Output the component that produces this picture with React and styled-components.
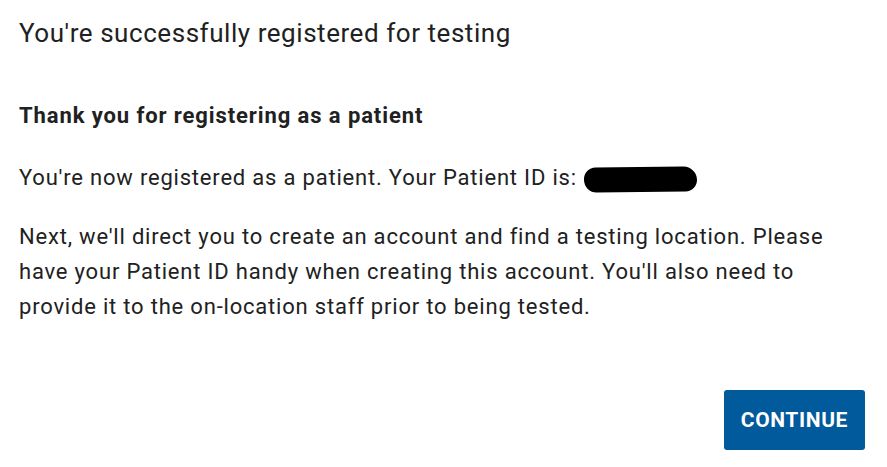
import React from "react";
import styled, { createGlobalStyle } from "styled-components";

const GlobalStyle = createGlobalStyle`
  html, body {
    margin: 0;
    padding: 0;
    background: #ffffff;
  }
  body {
    font-family: Roboto, "Liberation Sans", Arial, sans-serif;
    color: #212121;
  }
`;

const Dialog = styled.div`
  width: 887px;
  height: 467px;
  box-sizing: border-box;
  padding: 17px 22px 17px 19px;
  display: flex;
  flex-direction: column;
`;

const Title = styled.h1`
  margin: 0;
  font-size: 26px;
  font-weight: 400;
  line-height: 32px;
  letter-spacing: 0.55px;
  color: #212121;
`;

const Body = styled.div`
  flex: 1;
  padding-top: 52px;
`;

const Heading = styled.h2`
  margin: 0 0 29px;
  font-size: 22px;
  font-weight: 700;
  line-height: 30px;
  letter-spacing: 0.9px;
`;

const Text = styled.p`
  margin: 0 0 ${(p) => p.$gap || 0}px;
  font-size: 22px;
  line-height: 35px;
  letter-spacing: 0.8px;
  color: #212121;
`;

const Redacted = styled.span`
  display: inline-block;
  vertical-align: middle;
  width: 113px;
  height: 25px;
  margin-left: 7px;
  background: #000;
  border-radius: 12px 14px 12px 13px;
  transform: rotate(-0.6deg);
`;

const Actions = styled.div`
  display: flex;
  justify-content: flex-end;
`;

const Button = styled.button`
  height: 60px;
  padding: 0 17px;
  border: none;
  border-radius: 3px;
  background: #005a9c;
  color: #ffffff;
  font-family: Roboto, "Liberation Sans", Arial, sans-serif;
  font-size: 21px;
  font-weight: 700;
  letter-spacing: 0.6px;
  cursor: pointer;
`;

export default function App() {
  return (
    <>
      <GlobalStyle />
      <Dialog>
        <Title>You're successfully registered for testing</Title>
        <Body>
          <Heading>Thank you for registering as a patient</Heading>
          <Text $gap={24}>
            You're now registered as a patient. Your Patient ID is:
            <Redacted aria-label="Patient ID hidden" />
          </Text>
          <Text>
            Next, we'll direct you to create an account and find a testing
            location. Please have your Patient ID handy when creating this
            account. You'll also need to provide it to the on-location staff
            prior to being tested.
          </Text>
        </Body>
        <Actions>
          <Button>CONTINUE</Button>
        </Actions>
      </Dialog>
    </>
  );
}
